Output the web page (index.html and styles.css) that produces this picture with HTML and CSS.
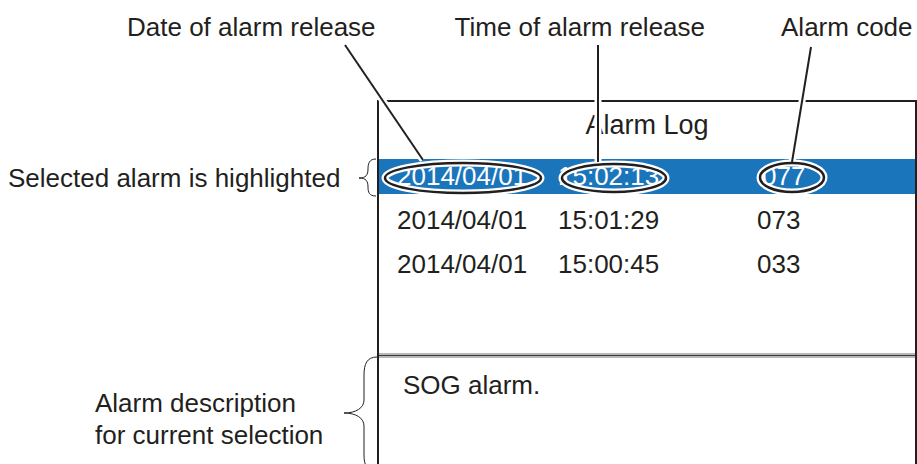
FILE: index.html
```html
<!DOCTYPE html>
<html lang="en">

<head>
    <meta charset="UTF-8">
    <meta name="viewport" content="width=device-width, initial-scale=1.0">
    <title>Alarm Log</title>
    <link rel="stylesheet" href="styles.css">
</head>

<body>
    <div class="figure">
        <div class="callouts">
            <span class="callout c-date">Date of alarm release</span>
            <span class="callout c-time">Time of alarm release</span>
            <span class="callout c-code">Alarm code</span>
        </div>

        <div class="main">
            <div class="notes">
                <div class="note note-sel">Selected alarm is highlighted</div>
                <div class="note note-desc">Alarm description<br>for current selection</div>
            </div>

            <div class="screen">
                <div class="log">
                    <div class="log-title">Alarm Log</div>
                    <div class="row selected">
                        <span>2014/04/01</span><span>15:02:13</span><span class="code">077</span>
                    </div>
                    <div class="row">
                        <span>2014/04/01</span><span>15:01:29</span><span>073</span>
                    </div>
                    <div class="row">
                        <span>2014/04/01</span><span>15:00:45</span><span>033</span>
                    </div>
                </div>
                <div class="divider"></div>
                <div class="desc">SOG alarm.</div>
            </div>
        </div>

        <!-- leader lines, ellipses and braces drawn over the screen -->
        <svg class="overlay" width="917" height="464" viewBox="0 0 917 464">
            <g fill="none" stroke="#fff" stroke-width="7">
                <line x1="345" y1="45" x2="423" y2="160" />
                <line x1="598" y1="45" x2="598" y2="162" />
                <line x1="811" y1="47" x2="792" y2="162" />
                <ellipse cx="463" cy="178" rx="78" ry="15" />
                <ellipse cx="614" cy="178" rx="52" ry="14" />
                <ellipse cx="792" cy="177.5" rx="32" ry="14.5" />
            </g>
            <g fill="none" stroke="#231f20" stroke-width="2.5">
                <line x1="345" y1="45" x2="423" y2="160" stroke-width="2" />
                <line x1="598" y1="45" x2="598" y2="162" stroke-width="2" />
                <line x1="811" y1="47" x2="792" y2="162" stroke-width="2" />
                <ellipse cx="463" cy="178" rx="78" ry="15" />
                <ellipse cx="614" cy="178" rx="52" ry="14" />
                <ellipse cx="792" cy="177.5" rx="32" ry="14.5" />
            </g>
            <g fill="none" stroke="#231f20" stroke-width="1">
                <path d="M376 159 C369 159 368 164 368 169 C368 175 366 178 359 178 C366 178 368 181 368 187 C368 192 369 196 376 196" />
                <path d="M377 357 C367 357 364 364 364 375 L364 400 C364 408 356 413 344 413 C356 413 364 418 364 426 L364 455 C364 465 367 472 377 472" />
            </g>
        </svg>
    </div>
</body>

</html>
```

FILE: styles.css
```css
body {
    margin: 0;
    padding: 0;
    background-color: #fff;
    color: #231f20;
    font-family: "Liberation Sans", Arial, sans-serif;
    font-size: 26px;
}

.figure {
    position: relative;
    width: 917px;
    height: 464px;
    overflow: hidden;
}

.callouts {
    display: flex;
    height: 100px;
    padding-top: 12px;
    box-sizing: border-box;
    line-height: 30px;
}

.c-date {
    margin-left: 127px;
}

.c-time {
    margin-left: 79px;
}

.c-code {
    margin-left: 76px;
}

.main {
    display: flex;
}

.notes {
    width: 377px;
    flex-shrink: 0;
    padding-left: 8px;
    box-sizing: border-box;
}

.note-sel {
    margin-top: 63px;
    line-height: 30px;
}

.note-desc {
    margin-top: 194px;
    padding-left: 87px;
    line-height: 32px;
}

.screen {
    width: 540px;
    height: 400px;
    border-top: 2px solid #231f20;
    border-left: 2px solid #231f20;
    border-right: 2px solid #231f20;
    box-sizing: border-box;
    display: flex;
    flex-direction: column;
}

.log {
    height: 251px;
}

.log-title {
    height: 57px;
    line-height: 46px;
    text-align: center;
    font-size: 27px;
}

.row {
    display: grid;
    grid-template-columns: 161px 199px 1fr;
    padding-left: 18px;
    height: 35px;
    line-height: 35px;
    margin-bottom: 9px;
}

.row.selected {
    background-color: #1b75bb;
    color: #fff;
}

.row .code {
    padding-left: 5px;
}

.divider {
    height: 1px;
    background-color: #3a3a3a;
    border-top: 2px solid #b8b8b8;
    border-bottom: 2px solid #b8b8b8;
}

.desc {
    padding: 12px 0 0 24px;
    line-height: 30px;
}

.overlay {
    position: absolute;
    top: 0;
    left: 0;
    pointer-events: none;
}
```
